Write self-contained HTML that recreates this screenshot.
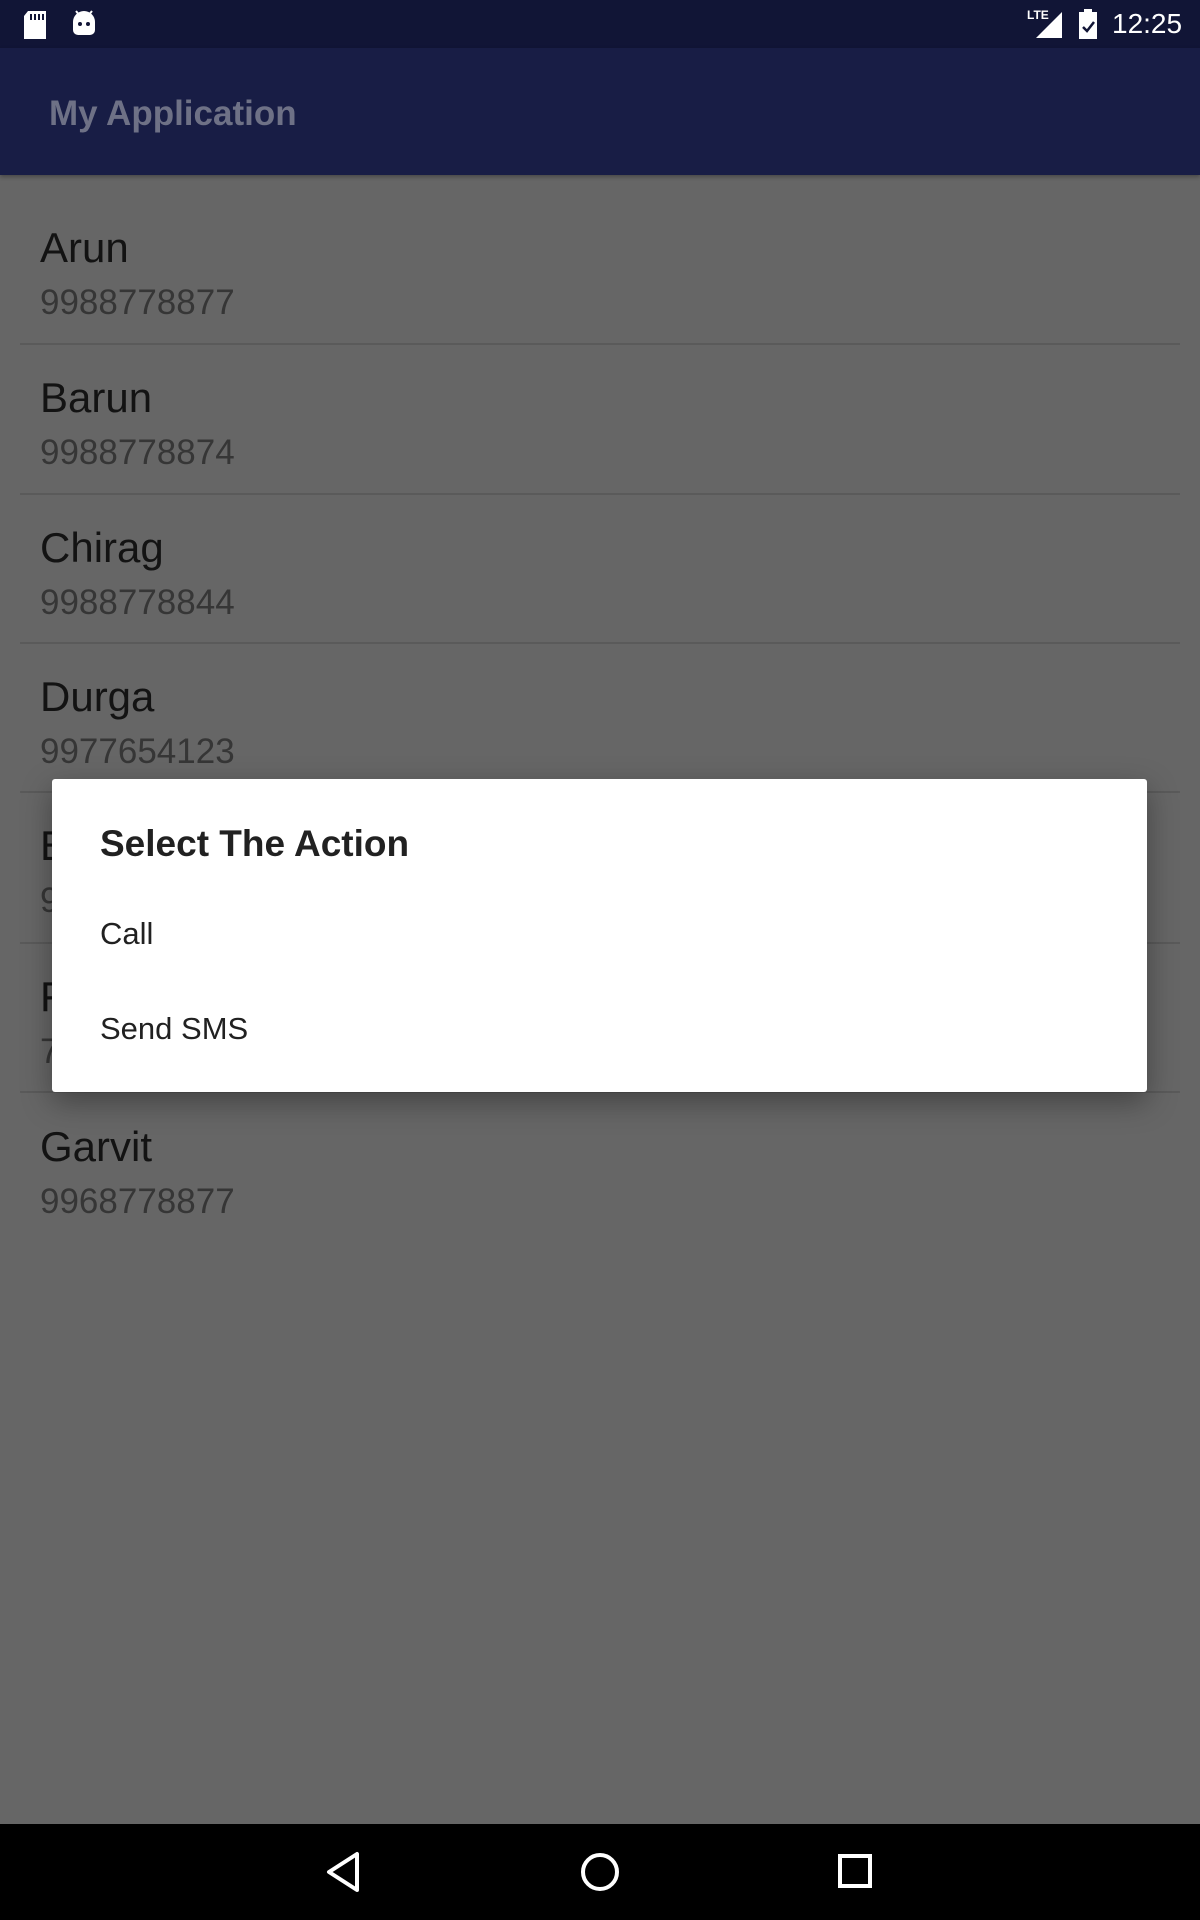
<!DOCTYPE html>
<html><head><meta charset="utf-8"><style>
body{margin:0;width:1200px;height:1920px;position:relative;background:#666;font-family:"Liberation Sans",sans-serif;overflow:hidden}
.abs{position:absolute}
.status{left:0;top:0;width:1200px;height:48px;background:#111536}
.bar{left:0;top:48px;width:1200px;height:127px;background:#181d45;box-shadow:0 2px 4px rgba(0,0,0,.3)}
.bar span{position:absolute;left:49px;top:66px;transform:translateY(-50%);font-size:35px;font-weight:bold;color:#6e7186}
.item{position:absolute;left:20px;width:1160px;border-bottom:2px solid #5a5a5a}
.n{position:absolute;left:20px;font-size:42px;color:#131313}
.p{position:absolute;left:20px;font-size:35px;color:#363636}
.dlg{left:52px;top:779px;width:1095px;height:313px;background:#fff;box-shadow:0 10px 30px rgba(0,0,0,.35);border-radius:3px}
.nav{left:0;top:1824px;width:1200px;height:96px;background:#000}
</style></head><body>
<div class="abs status">
<svg class="abs" style="left:22px;top:10px" width="26" height="30" viewBox="0 0 26 30"><path d="M6 1h18v28H2V6z" fill="#fff"/><path d="M9 4v6M13 4v6M17 4v6M21 4v6" stroke="#111536" stroke-width="2"/></svg>
<svg class="abs" style="left:70px;top:8px" width="28" height="30" viewBox="0 0 28 30"><path d="M3 14a11 11 0 0 1 22 0v8a5 5 0 0 1-5 5H8a5 5 0 0 1-5-5z" fill="#fff"/><path d="M6 3l4 5M22 3l-4 5" stroke="#fff" stroke-width="2"/><circle cx="10" cy="16" r="2" fill="#111536"/><circle cx="18" cy="16" r="2" fill="#111536"/></svg>
<div class="abs" style="left:1027px;top:8px;font-size:12px;color:#fff;font-weight:bold">LTE</div>
<svg class="abs" style="left:1032px;top:10px" width="32" height="30"><path d="M30 2V28H4z" fill="#fff"/></svg>
<svg class="abs" style="left:1078px;top:9px" width="20" height="30"><path d="M6 0h8v3h5v27H1V3h5z" fill="#fff"/><path d="M5 18l4 4 7-9" stroke="#111536" stroke-width="2.5" fill="none"/></svg>
<div class="abs" style="left:1112px;top:8px;font-size:28px;color:#fff">12:25</div>
</div>
<div class="abs bar"><span>My Application</span></div>

<div class="item" style="top:175px;height:168px"><div class="n" style="top:49px">Arun</div><div class="p" style="top:108px">9988778877</div></div>
<div class="item" style="top:345px;height:148px"><div class="n" style="top:29px">Barun</div><div class="p" style="top:88px">9988778874</div></div>
<div class="item" style="top:495px;height:147px"><div class="n" style="top:29px">Chirag</div><div class="p" style="top:88px">9988778844</div></div>
<div class="item" style="top:644px;height:147px"><div class="n" style="top:29px">Durga</div><div class="p" style="top:88px">9977654123</div></div>
<div class="item" style="top:793px;height:149px"><div class="n" style="top:29px">E</div><div class="p" style="top:88px">9</div></div>
<div class="item" style="top:944px;height:147px"><div class="n" style="top:29px">F</div><div class="p" style="top:88px">7</div></div>
<div class="item" style="top:1093px;height:147px;border:none"><div class="n" style="top:30px">Garvit</div><div class="p" style="top:89px">9968778877</div></div>

<div class="abs dlg">
<div class="abs" style="left:48px;top:44px;font-size:37px;font-weight:bold;color:#212121">Select The Action</div>
<div class="abs" style="left:48px;top:137px;font-size:31px;color:#212121">Call</div>
<div class="abs" style="left:48px;top:232px;font-size:31px;color:#212121">Send SMS</div>
</div>

<div class="abs nav">
<svg class="abs" style="left:324px;top:26px" width="40" height="44"><path d="M33 4V40L5 22z" fill="none" stroke="#fff" stroke-width="4" stroke-linejoin="round"/></svg>
<svg class="abs" style="left:578px;top:26px" width="44" height="44"><circle cx="22" cy="22" r="17" fill="none" stroke="#fff" stroke-width="4"/></svg>
<svg class="abs" style="left:836px;top:28px" width="40" height="40"><rect x="4" y="4" width="30" height="30" fill="none" stroke="#fff" stroke-width="4"/></svg>
</div>
</body></html>
